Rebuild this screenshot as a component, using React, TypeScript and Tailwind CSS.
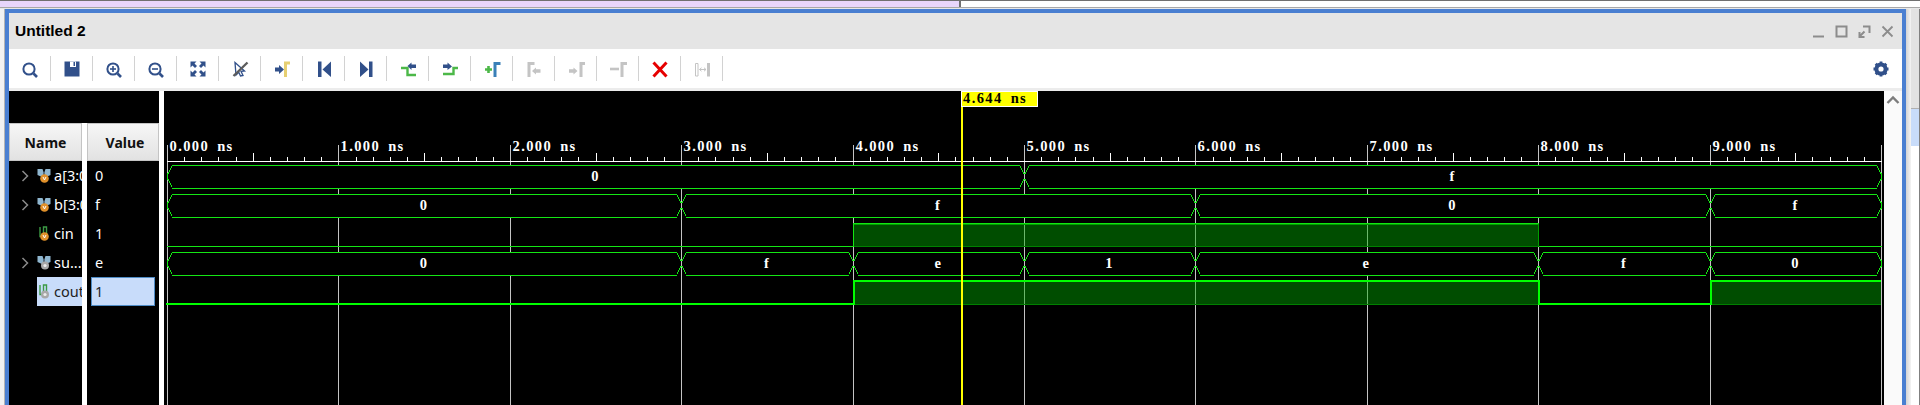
import type { ReactNode } from "react";

const NAVY = "#31508a";
const GREEN = "#14e614";
const STEP_GREEN = "#4cb848";
const MUTED = "#c4c4c4";

const tx = (t: number) => Math.round(167 + t * 171.4) + 0.5;

function Icon({ children }: { children: ReactNode }) {
  return (
    <svg width={24} height={24} viewBox="0 0 24 24" fill="none">
      {children}
    </svg>
  );
}

function Lens({ mark }: { mark?: "plus" | "minus" }) {
  return (
    <Icon>
      <circle cx={11} cy={12} r={5.6} stroke={NAVY} strokeWidth={2} />
      <path d="M15.5 16.5 L19 20" stroke={NAVY} strokeWidth={2.6} />
      {mark && <path d="M8 12 H14" stroke={NAVY} strokeWidth={1.6} />}
      {mark === "plus" && <path d="M11 9 V15" stroke={NAVY} strokeWidth={1.6} />}
    </Icon>
  );
}

const corner = "M4.5 4.5 H10.5 L8.5 6.5 L11 9 L9 11 L6.5 8.5 L4.5 10.5 Z";

const toolbar: ReactNode[] = [
  <Lens />,
  <Icon>
    <path d="M4.5 4.5 H19.5 V19.5 H4.5 Z" fill={NAVY} />
    <path d="M10 4.5 H16 V10 H10 Z" fill="#fff" />
    <path d="M13.5 5 H15 V9 H13.5 Z" fill={NAVY} />
  </Icon>,
  <Lens mark="plus" />,
  <Lens mark="minus" />,
  <Icon>
    <path d={corner} fill={NAVY} />
    <path d={corner} fill={NAVY} transform="matrix(-1 0 0 1 24 0)" />
    <path d={corner} fill={NAVY} transform="matrix(1 0 0 -1 0 24)" />
    <path d={corner} fill={NAVY} transform="matrix(-1 0 0 -1 24 24)" />
  </Icon>,
  <Icon>
    <path d="M7 5.5 L16.5 14 L13 14.3 L15 18.5 L12.5 19 L10.8 15.3 L8 18 Z" stroke={NAVY} strokeWidth={1.3} />
    <path d="M5.5 19 L19.5 5.5" stroke="#5c5c5c" strokeWidth={2.4} />
  </Icon>,
  <Icon>
    <path d="M5 10.5 H9 V8 L14 12.5 L9 17 V14.5 H5 Z" fill={NAVY} />
    <path d="M15.5 20 V6 H20" stroke="#e6cf72" strokeWidth={3} />
  </Icon>,
  <Icon>
    <path d="M6 4.5 H9.5 V20 H6 Z M10.5 12.5 L19 4.5 V20 Z" fill={NAVY} />
  </Icon>,
  <Icon>
    <path d="M6 4.5 L14.5 12.5 L6 20 Z M15 4.5 H18.5 V20 H15 Z" fill={NAVY} />
  </Icon>,
  <Icon>
    <path d="M5 11 H11.5 V18 H20" stroke={STEP_GREEN} strokeWidth={2.4} />
    <path d="M11.5 9 L15.5 5.5 V7.5 H20 V11 H15.5 V13 Z" fill={NAVY} />
  </Icon>,
  <Icon>
    <path d="M5 17 H15.5 V11 H20" stroke={STEP_GREEN} strokeWidth={2.4} />
    <path d="M5 7.5 H9.5 V5.5 L14 9.5 L9.5 13 V11 H5 Z" fill={NAVY} />
  </Icon>,
  <Icon>
    <path d="M5 12.5 H12 M8.5 9 V16" stroke={STEP_GREEN} strokeWidth={2.6} />
    <path d="M15 20 V6.5 H20.5" stroke="#3a80b8" strokeWidth={3} />
  </Icon>,
  <Icon>
    <path d="M7 20 V6.5 H12.5" stroke={MUTED} strokeWidth={3} />
    <path d="M10 14 L14 10.5 V12.3 H18.5 V15.7 H14 V17.5 Z" fill={MUTED} />
  </Icon>,
  <Icon>
    <path d="M17 20 V6.5 H21" stroke={MUTED} strokeWidth={3} />
    <path d="M5 12.3 H9.5 V10.5 L13.5 14 L9.5 17.5 V15.7 H5 Z" fill={MUTED} />
  </Icon>,
  <Icon>
    <path d="M4 12 H13" stroke={MUTED} strokeWidth={2.6} />
    <path d="M16 20 V6.5 H21" stroke={MUTED} strokeWidth={3} />
  </Icon>,
  <Icon>
    <path d="M5.5 5.5 L18.5 19.5 M18.5 5.5 L5.5 19.5" stroke="#e60000" strokeWidth={3} />
  </Icon>,
  <Icon>
    <path d="M5.5 6.5 H8 V19 H5.5 Z" stroke={MUTED} />
    <path d="M17 6 H20 V19.5 H17 Z" fill={MUTED} />
    <path d="M9.5 12.5 H16 M9.5 12.5 L11.5 10.8 M9.5 12.5 L11.5 14.2 M16 12.5 L14 10.8 M16 12.5 L14 14.2" stroke={MUTED} />
  </Icon>,
];

function SignalIcon({ bus, input }: { bus: boolean; input: boolean }) {
  return (
    <svg width={14} height={18} viewBox="0 0 14 18" className="shrink-0">
      {bus ? (
        <>
          <path d="M0.5 2 H5.5 L6.5 5 L7.5 5 L8.5 2 H13.5 V8 L9 10 H5 L0.5 8 Z" fill="#8fb6cf" />
          <path d="M6 5 H8 V9 H6 Z" fill="#586f80" />
        </>
      ) : (
        <path d="M3 2 V11.5 H6.5 M6.5 11 V2 H9.5 V9" stroke="#3c9a45" strokeWidth={1.4} fill="none" />
      )}
      {input ? (
        <>
          <circle cx={7.5} cy={11.5} r={4.3} fill="#e0902a" />
          <path d="M6 10 L7.5 13 L9 10" stroke="#fff" fill="none" />
        </>
      ) : (
        <>
          <circle cx={8} cy={11.5} r={4} fill="#a8a8a8" />
          <circle cx={8} cy={11.5} r={1.6} fill="#ececec" />
        </>
      )}
    </svg>
  );
}

const signals = [
  { name: "a[3:0]", value: "0", bus: true, input: true },
  { name: "b[3:0]", value: "f", bus: true, input: true },
  { name: "cin", value: "1", bus: false, input: true },
  { name: "su...0]", value: "e", bus: true, input: false },
  { name: "cout", value: "1", bus: false, input: false, selected: true },
];

// [start time, end time, label] for every bus value
const buses: { top: number; parts: [number, number, string][] }[] = [
  { top: 165, parts: [[0, 5, "0"], [5, 10, "f"]] },
  { top: 194, parts: [[0, 3, "0"], [3, 6, "f"], [6, 9, "0"], [9, 10, "f"]] },
  {
    top: 252,
    parts: [[0, 3, "0"], [3, 4, "f"], [4, 5, "e"], [5, 6, "1"], [6, 8, "e"], [8, 9, "f"], [9, 10, "0"]],
  },
];

const WAVE_TEXT = "font-['Liberation_Serif'] font-bold text-[14.5px] tracking-[1.4px] [word-spacing:3px]";

// Stair steps of a bus edge, drawn pixel by pixel so no column drops out:
// four columns, two pixels each, then the dot next to the grid line.
function busEdge(x: number, top: number, side: 1 | -1) {
  const parts = [`M${x} ${top + 8}h1v1h-1z`, `M${x} ${top + 14}h1v1h-1z`];
  for (let k = 0; k < 4; k++) {
    const col = x + side * (4 - k);
    parts.push(`M${col} ${top + 1 + k * 2}h1v2h-1z`);
    parts.push(`M${col} ${top + 20 - k * 2}h1v2h-1z`);
  }
  return parts.join("");
}

function Waveform() {
  const ticks = Array.from({ length: 101 }, (_, i) => i);
  const majors = ticks.filter((i) => i % 10 === 0);

  return (
    <svg width={1720} height={314} viewBox="164 91 1720 314" className="block shrink-0" shapeRendering="crispEdges">
      <rect x={164} y={91} width={1720} height={314} fill="#000" />

      {majors.map((i) => (
        <path key={i} d={`M${tx(i / 10)} 145 V405`} stroke="#c4c4c4" />
      ))}
      <path d="M167 161.5 H1882" stroke="#fff" />
      {ticks
        .filter((i) => i % 10 !== 0)
        .map((i) => (
          <path key={i} d={`M${tx(i / 10)} ${i % 5 === 0 ? 153 : 157} V161`} stroke="#fff" />
        ))}
      {majors.slice(0, 10).map((i) => (
        <text key={i} x={tx(i / 10) + 2} y={151} fill="#fff" className={WAVE_TEXT}>
          {i / 10}.000 ns
        </text>
      ))}

      {buses.map((bus) =>
        bus.parts.map(([from, to, label]) => {
          const a = Math.floor(tx(from));
          const b = Math.floor(tx(to));
          const t = bus.top;
          const u = t + 23;
          return (
            <g key={`${t}-${from}`}>
              <path d={`M${a + 1} ${t + 8} L${a + 5} ${t} H${b - 4} L${b} ${t + 8} V${t + 15} L${b - 4} ${u} H${a + 5} L${a + 1} ${t + 15} Z`} fill="#000" />
              <rect x={a + 5} y={t} width={b - a - 9} height={1} fill={GREEN} />
              <rect x={a + 5} y={u} width={b - a - 9} height={1} fill={GREEN} />
              <path d={busEdge(b, t, -1) + busEdge(a, t, 1)} fill={GREEN} />
              {from === 0 && <rect x={a} y={t + 8} width={1} height={7} fill={GREEN} />}
              {to === 10 && <rect x={b} y={t + 8} width={1} height={7} fill={GREEN} />}
              <text x={(a + b) / 2} y={t + 16} fill="#fff" textAnchor="middle" className={WAVE_TEXT}>
                {label}
              </text>
            </g>
          );
        })
      )}

      {/* cin */}
      <rect x={tx(4)} y={224} width={tx(8) - tx(4)} height={22} fill="#00aa00" fillOpacity={0.45} />
      <path d={`M${tx(0) - 1} 246.5 H${tx(4)} V223.5 H${tx(8)} V246.5 H1882`} stroke={GREEN} fill="none" />
      <path d={`M${tx(4)} 224.5 H${tx(8)}`} stroke="#00a000" />
      <path d={`M${tx(4)} 246.5 H${tx(8)}`} stroke="#008000" />
      <path d={`M${tx(8)} 224 V246`} stroke="#00a000" />

      {/* cout */}
      <rect x={tx(4)} y={282} width={tx(8) - tx(4)} height={22} fill="#00aa00" fillOpacity={0.45} />
      <rect x={tx(9)} y={282} width={1881 - tx(9)} height={22} fill="#00aa00" fillOpacity={0.45} />
      <path d={`M${tx(4)} 304.5 H${tx(8)} M${tx(9)} 304.5 H1881`} stroke="#008000" />
      <path
        d={`M166 304 H${tx(4)} V281 H${tx(8)} V304 H${tx(9)} V281 H1881`}
        stroke="#00ff00"
        strokeWidth={2}
        fill="none"
      />

      {/* time cursor */}
      <rect x={961} y={91} width={2} height={314} fill="#ffff00" />
      <rect x={961} y={91} width={77} height={16} fill="#fff" />
      <rect x={962} y={92} width={75} height={14} fill="#ffff00" />
      <text x={963} y={103} fill="#000" className={WAVE_TEXT}>
        4.644 ns
      </text>
    </svg>
  );
}

function NameColumn() {
  return (
    <div className="w-[73px] overflow-hidden">
      <div className="flex h-[38px] items-center justify-center border border-[#c4c4c4] bg-gradient-to-b from-[#f6f6f6] to-[#e2e2e2] text-[14px] font-bold text-[#111]">
        Name
      </div>
      {signals.map((s) => (
        <div key={s.name} className="flex h-[29px] items-center">
          <div className="flex w-[28px] shrink-0 justify-center pl-[4px]">
            {s.bus && (
              <svg width={10} height={14} viewBox="0 0 10 14" fill="none">
                <path d="M2.5 2 L7.5 7 L2.5 12" stroke="#8a8a8a" strokeWidth={1.5} />
              </svg>
            )}
          </div>
          <div
            className={`flex h-full flex-1 items-center gap-[3px] whitespace-nowrap ${
              s.selected ? "bg-[#c8dcfa] text-[#222]" : "text-white"
            }`}
          >
            <SignalIcon bus={s.bus} input={s.input} />
            <span>{s.name}</span>
          </div>
        </div>
      ))}
    </div>
  );
}

function ValueColumn() {
  return (
    <div className="w-[72px]">
      <div className="flex h-[38px] items-center justify-center border border-[#c4c4c4] bg-gradient-to-b from-[#f6f6f6] to-[#e2e2e2] pl-[4px] text-[14px] font-bold text-[#111]">
        Value
      </div>
      {signals.map((s) => (
        <div
          key={s.name}
          className={`mx-[4px] flex h-[29px] items-center px-[4px] ${
            s.selected ? "border border-[#4f8cc6] bg-[#c8dcfa] pl-[3px] text-[#222]" : "text-white"
          }`}
        >
          {s.value}
        </div>
      ))}
    </div>
  );
}

export default function App() {
  return (
    <div className="flex h-[405px] w-[1920px] flex-col overflow-hidden bg-[#f2f2f2] font-['Noto_Sans',sans-serif] text-[14.5px]">
      <div className="flex h-[8px] shrink-0 border-t border-b border-t-[#707070] border-b-[#a8a8a8]">
        <div className="w-[959px] bg-[#e8d6fb]" />
        <div className="w-[2px] bg-[#707070]" />
        <div className="flex-1 bg-white" />
      </div>
      <div className="h-px shrink-0 bg-[#e8e8e8]" />

      <div className="flex min-h-0 flex-1">
        <div className="w-[5px] border-r border-r-[#b4b4b4] bg-[#f2f2f2]" />

        <div className="flex w-[1901px] flex-col border-x-[4px] border-t-[4px] border-[#4a7fd1]">
          <div className="flex h-[36px] shrink-0 items-center justify-between bg-[#e5e5e5] pl-[6px] pr-[8px]">
            <span className="font-['Liberation_Sans',sans-serif] text-[15.5px] font-bold text-black">Untitled 2</span>
            <div className="flex items-center gap-[10px]">
              <svg width={13} height={13} viewBox="0 0 13 13" fill="none">
                <path d="M1 11.5 H12" stroke="#8c8c8c" strokeWidth={2} />
              </svg>
              <svg width={13} height={13} viewBox="0 0 13 13" fill="none">
                <path d="M1.5 1.5 H11.5 V11.5 H1.5 Z" stroke="#8c8c8c" strokeWidth={2} />
              </svg>
              <svg width={13} height={13} viewBox="0 0 13 13" fill="none">
                <path d="M5 1.5 H11.5 V8 M1 12 L6.5 6.5 M1.5 7 V12 H6.5" stroke="#8c8c8c" strokeWidth={2} />
              </svg>
              <svg width={13} height={13} viewBox="0 0 13 13" fill="none">
                <path d="M1.5 1.5 L11.5 11.5 M11.5 1.5 L1.5 11.5" stroke="#8c8c8c" strokeWidth={1.8} />
              </svg>
            </div>
          </div>

          <div className="flex h-[39px] shrink-0 items-center bg-white">
            {toolbar.map((icon, i) => (
              <div key={i} className="flex items-center">
                <div className="flex w-[41px] justify-center">{icon}</div>
                <div className="h-[25px] w-px bg-[#d2d2d2]" />
              </div>
            ))}
            <div className="ml-auto mr-[9px]">
              <svg width={24} height={24} viewBox="0 0 24 24" fill="none">
                <circle cx={12} cy={12} r={4.6} stroke={NAVY} strokeWidth={4} />
                <path
                  d="M12 4.5 V7 M12 17 V19.5 M4.5 12 H7 M17 12 H19.5 M6.7 6.7 L8.5 8.5 M15.5 15.5 L17.3 17.3 M17.3 6.7 L15.5 8.5 M8.5 15.5 L6.7 17.3"
                  stroke={NAVY}
                  strokeWidth={2.8}
                />
              </svg>
            </div>
          </div>

          <div className="h-[3px] shrink-0 bg-[#ececec]" />

          <div className="flex min-h-0 flex-1 bg-white">
            <div className="w-[150px] shrink-0 bg-black pt-[32px]">
              <div className="flex h-full">
                <NameColumn />
                <div className="w-[5px] bg-white" />
                <ValueColumn />
              </div>
            </div>
            <div className="w-[5px] shrink-0 bg-white" />
            <Waveform />
            <div className="flex w-[18px] shrink-0 justify-center bg-[#fafafa] pt-[4px]">
              <svg width={14} height={10} viewBox="0 0 14 10" fill="none">
                <path d="M1.5 8 L7 2.5 L12.5 8" stroke="#7c7c7c" strokeWidth={2.4} />
              </svg>
            </div>
          </div>
        </div>

        <div className="flex w-[14px] flex-col border-r border-r-[#808080]">
          <div className="flex flex-1">
            <div className="w-[5px] bg-gradient-to-r from-[#d4d4d4] to-[#f4f4f4]" />
            <div className="flex flex-1 flex-col">
              <div className="h-[100px] border-b border-b-[#b0b0b0] bg-[#e2e2e2]" />
              <div className="h-[37px] bg-[#c8dcfa]" />
              <div className="flex-1 bg-white" />
            </div>
          </div>
        </div>
      </div>
    </div>
  );
}
